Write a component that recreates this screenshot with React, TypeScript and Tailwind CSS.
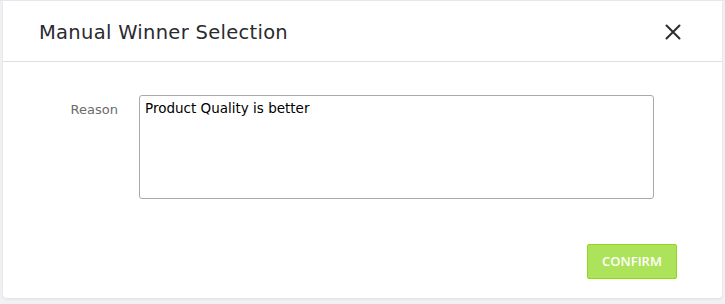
import { useState } from 'react';

export default function App() {
    const [reason, setReason] = useState('Product Quality is better');

    return (
        <div className="w-[725px] h-[304px] bg-[#f1f1f3] border-t border-[#e6e6ef] pl-[3px] pr-[3px] overflow-hidden">
            <div className="w-[719px] h-[297px] bg-white rounded-b-[4px] shadow-[0_1px_3px_rgba(0,0,0,0.08)] flex flex-col font-['DejaVu_Sans',sans-serif]">
                {/* Header */}
                <div className="h-[61px] flex items-center justify-between pl-[36px] pr-[41px] pt-[3px] border-b border-[#dedede]">
                    <h2 className="text-[19.5px] text-[#2a2a30] tracking-[0.3px]">Manual Winner Selection</h2>
                    <button className="text-[#2b2b33] -mt-[2px]">
                        <svg width="16" height="16" viewBox="0 0 16 16" fill="none" stroke="currentColor" strokeWidth="2" strokeLinecap="round">
                            <path d="M1.5 1.5L14.5 14.5M14.5 1.5L1.5 14.5" />
                        </svg>
                    </button>
                </div>

                {/* Body */}
                <div className="flex items-start pt-[33px] pl-[67px]">
                    <label className="w-[69px] text-right pr-[21px] pt-[5px] text-[13px] text-[#6b6b6b]">Reason</label>
                    <textarea
                        value={reason}
                        onChange={e => setReason(e.target.value)}
                        className="w-[515px] h-[104px] border border-[#a9a9a9] rounded-[3px] px-[5px] py-[2px] text-[13.5px] text-black resize-none outline-none font-['DejaVu_Sans',sans-serif]"
                    />
                </div>

                {/* Footer */}
                <div className="flex justify-end pr-[45px] mt-[45px]">
                    <button className="w-[90px] h-[35px] bg-[#ade35a] border border-[#93d613] rounded-[2px] text-white text-[13px] font-['Open_Sans',sans-serif] font-semibold">
                        CONFIRM
                    </button>
                </div>
            </div>
        </div>
    );
}
